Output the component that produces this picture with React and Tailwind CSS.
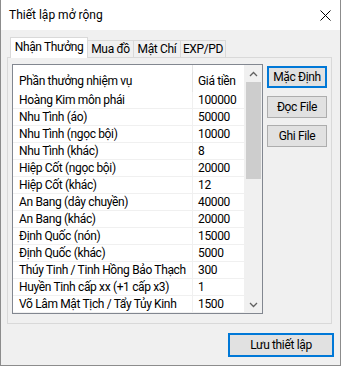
import React from "react";

const rows = [
  ["Hoàng Kim môn phái", "100000"],
  ["Nhu Tình (áo)", "50000"],
  ["Nhu Tình (ngọc bội)", "10000"],
  ["Nhu Tình (khác)", "8"],
  ["Hiệp Cốt (ngọc bội)", "20000"],
  ["Hiệp Cốt (khác)", "12"],
  ["An Bang (dây chuyền)", "40000"],
  ["An Bang (khác)", "20000"],
  ["Định Quốc (nón)", "15000"],
  ["Định Quốc (khác)", "5000"],
  ["Thúy Tinh / Tinh Hồng Bảo Thạch", "300"],
  ["Huyền Tinh cấp xx (+1 cấp x3)", "1"],
  ["Võ Lâm Mật Tịch / Tẩy Tủy Kinh", "1500"],
];

export default function App() {
  return (
    <div
      className="w-[341px] h-[366px] bg-[#f0f0f0] border-x border-b border-[#8c8c8c] flex flex-col text-[12px] leading-[17px] text-black overflow-hidden whitespace-nowrap"
      style={{ fontFamily: 'Roboto, "Liberation Sans", sans-serif' }}
    >
      {/* Title bar */}
      <div className="h-[30px] bg-white flex items-center justify-between pl-[8px] pr-[9px] shrink-0">
        <span className="text-[12px]">Thiết lập mở rộng</span>
        <svg width="11" height="11" viewBox="0 0 11 11" className="mt-[1px]">
          <path d="M0.5 0.5 L10.5 10.5 M10.5 0.5 L0.5 10.5" stroke="#000" strokeWidth="1" />
        </svg>
      </div>

      <div className="tracking-[-0.35px] flex flex-col">
        {/* Tabs */}
        <div className="h-[20px] mt-[7px] ml-[9px] flex items-end shrink-0">
          <div className="relative z-10 -mb-px h-[21px] w-[78px] bg-white border border-b-0 border-[#d9d9d9] flex items-center justify-center pb-[1px]">
            Nhận Thưởng
          </div>
          <div className="h-[17px] w-[46px] border border-l-0 border-b-0 border-[#d9d9d9] flex items-center justify-center">
            Mua đồ
          </div>
          <div className="h-[17px] w-[47px] border border-l-0 border-b-0 border-[#d9d9d9] flex items-center justify-center">
            Mật Chí
          </div>
          <div className="h-[17px] w-[45px] border border-l-0 border-b-0 border-[#d9d9d9] flex items-center justify-center">
            EXP/PD
          </div>
        </div>

        {/* Panel */}
        <div className="ml-[6px] w-[325px] h-[267px] border border-[#d9d9d9] bg-[#f0f0f0] flex items-start shrink-0">
          {/* List view */}
          <div className="ml-[4px] mt-[6px] w-[251px] h-[250px] border border-[#828790] bg-white flex">
            <div className="w-[232px] flex flex-col">
              <div className="h-[27px] flex">
                <div className="w-[180px] border-r border-[#e5e5e5] pl-[6px] pt-[8px]">Phần thưởng nhiệm vụ</div>
                <div className="w-[52px] border-r border-[#f0f0f0] pl-[5px] pt-[8px]">Giá tiền</div>
              </div>
              {rows.map(([name, price], i) => (
                <div key={i} className="h-[17px] flex border-b border-[#f0f0f0]">
                  <div className="w-[180px] border-r border-[#f0f0f0] pl-[6px] overflow-hidden leading-[16px]">
                    {name}
                  </div>
                  <div className="w-[52px] border-r border-[#f0f0f0] pl-[5px] leading-[16px]">{price}</div>
                </div>
              ))}
            </div>
            {/* Scrollbar */}
            <div className="w-[17px] bg-[#f0f0f0] flex flex-col">
              <div className="h-[17px] flex items-center justify-center">
                <svg width="9" height="6" viewBox="0 0 9 6">
                  <path d="M1 5 L4.5 1.5 L8 5" fill="none" stroke="#606060" strokeWidth="1.3" />
                </svg>
              </div>
              <div className="h-[97px] ml-[1px] w-[15px] bg-[#cdcdcd]" />
              <div className="flex-1" />
              <div className="h-[17px] flex items-center justify-center">
                <svg width="9" height="6" viewBox="0 0 9 6">
                  <path d="M1 1 L4.5 4.5 L8 1" fill="none" stroke="#606060" strokeWidth="1.3" />
                </svg>
              </div>
            </div>
          </div>

          {/* Buttons */}
          <div className="ml-[4px] mt-[8px] flex flex-col w-[60px]">
            <button className="h-[22px] w-[60px] bg-[#e1e1e1] border-2 border-[#0078d7] flex items-center justify-center">
              Mặc Định
            </button>
            <button className="mt-[8px] h-[22px] w-[60px] bg-[#e1e1e1] border border-[#adadad] flex items-center justify-center">
              Đọc File
            </button>
            <button className="mt-[7px] h-[22px] w-[60px] bg-[#e1e1e1] border border-[#adadad] flex items-center justify-center">
              Ghi File
            </button>
          </div>
        </div>

        {/* Bottom button */}
        <div className="flex justify-end pr-[6px] mt-[9px]">
          <button className="h-[24px] w-[106px] bg-[#e1e1e1] border-2 border-[#0078d7] flex items-center justify-center">
            Lưu thiết lập
          </button>
        </div>
      </div>
    </div>
  );
}
